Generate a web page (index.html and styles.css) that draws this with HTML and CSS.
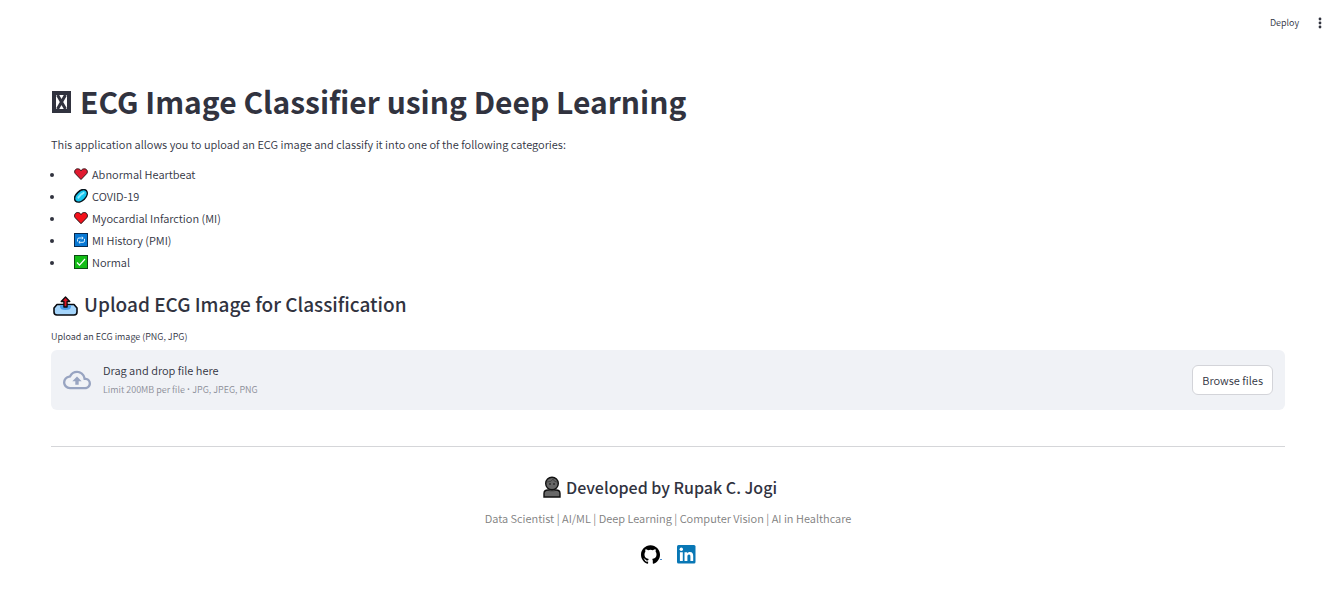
FILE: index.html
```html
<!DOCTYPE html>
<html lang="en">
<head>
<meta charset="utf-8">
<meta name="viewport" content="width=device-width, initial-scale=1">
<title>ECG Image Classifier</title>
<link rel="stylesheet" href="styles.css">
</head>
<body>
<header class="toolbar">
  <button class="deploy" type="button">Deploy</button>
  <button class="menu" type="button" aria-label="Main menu">
    <svg width="4" height="12" viewBox="0 0 4 12" fill="#31333f"><circle cx="2" cy="2" r="1.4"/><circle cx="2" cy="6" r="1.4"/><circle cx="2" cy="10" r="1.4"/></svg>
  </button>
</header>
<main class="content">
  <h1 class="title">
    <svg class="title-icon" width="19" height="22" viewBox="0 0 19 22" fill="none" stroke="#31333f"><rect x="2" y="2" width="15" height="18" stroke-width="4"/><path d="M5.500 4l8 14M13.500 4l-8 14" stroke-width="3"/></svg>
    <span>ECG Image Classifier using Deep Learning</span>
  </h1>
  <p class="intro">This application allows you to upload an ECG image and classify it into one of the following categories:</p>
  <ul class="categories">
    <li><span class="category"><svg class="emoji" viewBox="0 0 14 14"><path d="M7 12.5L1.3 6.6C-.2 4.7 1 1.8 3.6 1.8 5.2 1.8 6.4 2.6 7 3.8 7.6 2.6 8.8 1.8 10.4 1.8c2.6 0 3.8 2.9 2.3 4.8z" fill="#e01a30" stroke="#301015"/></svg>Abnormal Heartbeat</span></li>
    <li><span class="category"><svg class="emoji" viewBox="0 0 14 14"><path d="M1.500 12.100C-.200 9.900.800 6.400 3.700 3.600s6.500-3.900 8.700-2c1.700 2.100.800 5.800-2.100 8.700s-6.600 3.500-8.800 1.800z" fill="#16c6ee" stroke="#06141c" stroke-width="1.5"/><path d="M4.400 8.600C5.600 6.500 7.300 4.800 9.600 3.800" fill="none" stroke="#8ceaff" stroke-width="2" stroke-linecap="round"/></svg>COVID-19</span></li>
    <li><span class="category"><svg class="emoji" viewBox="0 0 14 14"><path d="M7 12.700L1.200 6.700C-.300 4.700.900 1.500 3.600 1.500 5.200 1.500 6.400 2.400 7 3.600 7.600 2.400 8.800 1.500 10.400 1.500c2.700 0 3.900 3.200 2.400 5.200z" fill="#f4121b" stroke="#201015"/></svg>Myocardial Infarction (MI)</span></li>
    <li><span class="category"><svg class="emoji" viewBox="0 0 14 14"><rect x=".5" y=".5" width="13" height="13" fill="#0878d4" stroke="#082b50"/><path d="M3.500 8.500v-2q0-1.500 1.500-1.500h4M7.800 3.700L9.200 5 7.800 6.300M10.500 5.800v2q0 1.500-1.500 1.500H5M6.200 8L4.800 9.300l1.400 1.300" fill="none" stroke="#d8f0ff"/></svg>MI History (PMI)</span></li>
    <li><span class="category"><svg class="emoji" viewBox="0 0 14 14"><rect x=".5" y=".5" width="13" height="13" fill="#13bd17" stroke="#0b4a13"/><path d="M3 7.500l2.500 2.700L11 4" fill="none" stroke="#fff" stroke-width="1.2"/></svg>Normal</span></li>
  </ul>
  <h2 class="subtitle">
    <svg width="25" height="20" viewBox="0 0 25 20" stroke="#090b10" stroke-linejoin="round"><path d="M4 8.500h17l3 3.500v4q0 3-3 3H4q-3 0-3-3v-4z" fill="#a5d5fb" stroke-width="1.6"/><path d="M7 9.300h11v1.200q0 3.500-5.500 3.500T7 10.500z" fill="#4a9ce9" stroke="none"/><path d="M12.500 1L8.200 5.500h2.700V11h3.200V5.500h2.700z" fill="#dd1425" stroke-width="1.3"/></svg>
    <span>Upload ECG Image for Classification</span>
  </h2>
  <label class="upload-label" for="browse">Upload an ECG image (PNG, JPG)</label>
  <section class="dropzone">
    <svg class="cloud" width="28" height="28" viewBox="0 0 24 24" fill="#98a4c1"><path d="M19.350 10.040A7.490 7.490 0 0 0 12 4C9.110 4 6.600 5.640 5.350 8.040A5.994 5.994 0 0 0 0 14c0 3.310 2.690 6 6 6h13c2.760 0 5-2.240 5-5 0-2.640-2.050-4.780-4.650-4.960zM19 18H6c-2.210 0-4-1.790-4-4 0-2.050 1.530-3.760 3.560-3.970l1.070-.110.500-.950A5.469 5.469 0 0 1 12 6c2.620 0 4.880 1.860 5.390 4.430l.300 1.500 1.530.110A2.980 2.980 0 0 1 22 15c0 1.650-1.350 3-3 3zM8 13h2.550v3h2.900v-3H16l-4-4z"/></svg>
    <div class="drop-text">
      <span class="drop-main">Drag and drop file here</span>
      <span class="drop-hint">Limit 200MB per file <span class="dot">•</span> JPG, JPEG, PNG</span>
    </div>
    <button class="browse" id="browse" type="button">Browse files</button>
  </section>
  <hr class="divider">
  <footer class="credits">
    <h3 class="author">
      <svg width="18" height="22" viewBox="0 0 18 22" stroke="#101010" stroke-width="1.4"><path d="M1 21v-3.500Q1 14 5 14h8q4 0 4 3.500V21z" fill="#686868"/><path d="M6.500 12h5v3.500h-5z" fill="#4b4b4b" stroke="none"/><circle cx="9" cy="7.500" r="6.300" fill="#666"/><path d="M4 6q5 0 6-3 1 3 4 3" fill="none" stroke="#444" stroke-width="1"/><path d="M7 7v2M11 7v2" stroke="#111" stroke-width="1"/></svg>
      <span>Developed by Rupak C. Jogi</span>
    </h3>
    <p class="roles">Data Scientist | AI/ML | Deep Learning | Computer Vision | AI in Healthcare</p>
    <nav class="links">
      <a class="github" href="#" aria-label="GitHub"><svg width="19" height="19" viewBox="0 0 24 24"><path d="M12 .300C5.400.300 0 5.700 0 12.300c0 5.300 3.400 9.800 8.200 11.400.600.100.800-.300.800-.600v-2.200c-3.300.700-4-1.400-4-1.400-.500-1.400-1.300-1.800-1.300-1.800-1.100-.700.100-.700.100-.700 1.200.100 1.800 1.200 1.800 1.200 1.100 1.800 2.800 1.300 3.500 1 .100-.800.400-1.300.800-1.600-2.700-.300-5.500-1.300-5.500-5.900 0-1.300.500-2.400 1.200-3.200-.100-.300-.500-1.500.100-3.200 0 0 1-.300 3.300 1.200a11.500 11.500 0 0 1 6 0c2.300-1.500 3.300-1.200 3.300-1.200.700 1.700.200 2.900.100 3.200.800.800 1.200 1.900 1.200 3.200 0 4.600-2.800 5.600-5.500 5.900.400.400.800 1.100.800 2.200v3.300c0 .300.200.700.800.600C20.600 22.100 24 17.600 24 12.300 24 5.700 18.600.300 12 .300z"/></svg></a>
      <a class="linkedin" href="#" aria-label="LinkedIn"><svg width="19" height="19" viewBox="0 0 19 19"><rect width="18.500" height="18.500" rx="1.500" fill="#0877b5"/><g fill="#fff"><circle cx="4.300" cy="4.300" r="1.700"/><path d="M2.900 7.200h2.900V16H2.900zM7.500 7.200h2.700v1.200c.5-.8 1.400-1.400 2.700-1.400 2.700 0 3.300 1.800 3.300 4.100V16h-2.800v-4.100c0-1 0-2.300-1.400-2.300s-1.600 1.100-1.600 2.200V16H7.500z"/></g></svg></a>
    </nav>
  </footer>
</main>
</body>
</html>
```
FILE: styles.css
```css
* { box-sizing: border-box; }
body {
  margin: 0;
  background: #fff;
  color: #31333f;
  font-family: "Noto Sans CJK SC", "Noto Sans", sans-serif;
  font-size: 11px;
  font-weight: 350;
  line-height: 20px;
}
h1, h2, h3, p, ul { margin: 0; padding: 0; }
button { font: inherit; color: inherit; cursor: pointer; }
svg { display: block; flex: none; }
.toolbar {
  display: flex;
  justify-content: flex-end;
  align-items: center;
  gap: 19px;
  height: 46px;
  padding-right: 11px;
}
.deploy, .menu { border: 0; padding: 0; background: none; }
.deploy, .upload-label, .drop-hint { font-size: 9px; }
.content { padding: 31px 48px 40px 51px; }
.title, .subtitle, .author { display: flex; align-items: center; }
.title { gap: 9px; padding-left: 1px; font-size: 30px; font-weight: 700; line-height: 48px; }
.title-icon { margin-top: 2px; }
.intro { margin-top: 9px; }
.categories { margin-top: 10px; padding-left: 14px; display: grid; gap: 2px; }
.categories li { padding-left: 9px; }
.category { display: inline-flex; align-items: center; gap: 4px; vertical-align: top; }
.emoji { width: 14px; height: 14px; }
.subtitle { margin-top: 18px; padding-left: 2px; gap: 6px; font-size: 19px; font-weight: 500; line-height: 28px; }
.subtitle svg { margin-top: 4px; }
.upload-label { display: block; margin-top: 9px; }
.dropzone {
  display: flex;
  align-items: center;
  margin-top: 3px;
  padding: 10px 12px;
  border-radius: 6px;
  background: #f0f2f6;
}
.drop-text { display: flex; flex: 1; flex-direction: column; margin-left: 12px; }
.drop-hint { color: #8b8d96; }
.dot { font-family: "Noto Sans", sans-serif; }
.browse {
  height: 30px;
  padding: 0 9px;
  border: 1px solid #d3d4d9;
  border-radius: 6px;
  background: #fff;
}
.divider { margin: 36px 0 0; border: 0; border-top: 1px solid #d5d6d9; }
.credits { display: flex; flex-direction: column; align-items: center; margin-top: 27px; }
.author { gap: 5px; margin-right: 16px; font-size: 16px; font-weight: 500; line-height: 26px; }
.roles { margin-top: 8px; color: #808080; }
.links { display: flex; gap: 15px; margin-top: 17px; }
.links a { display: flex; }
.github::after { content: ""; width: 2px; height: 14px; border-bottom: 1px solid #4c8bc9; }
```
